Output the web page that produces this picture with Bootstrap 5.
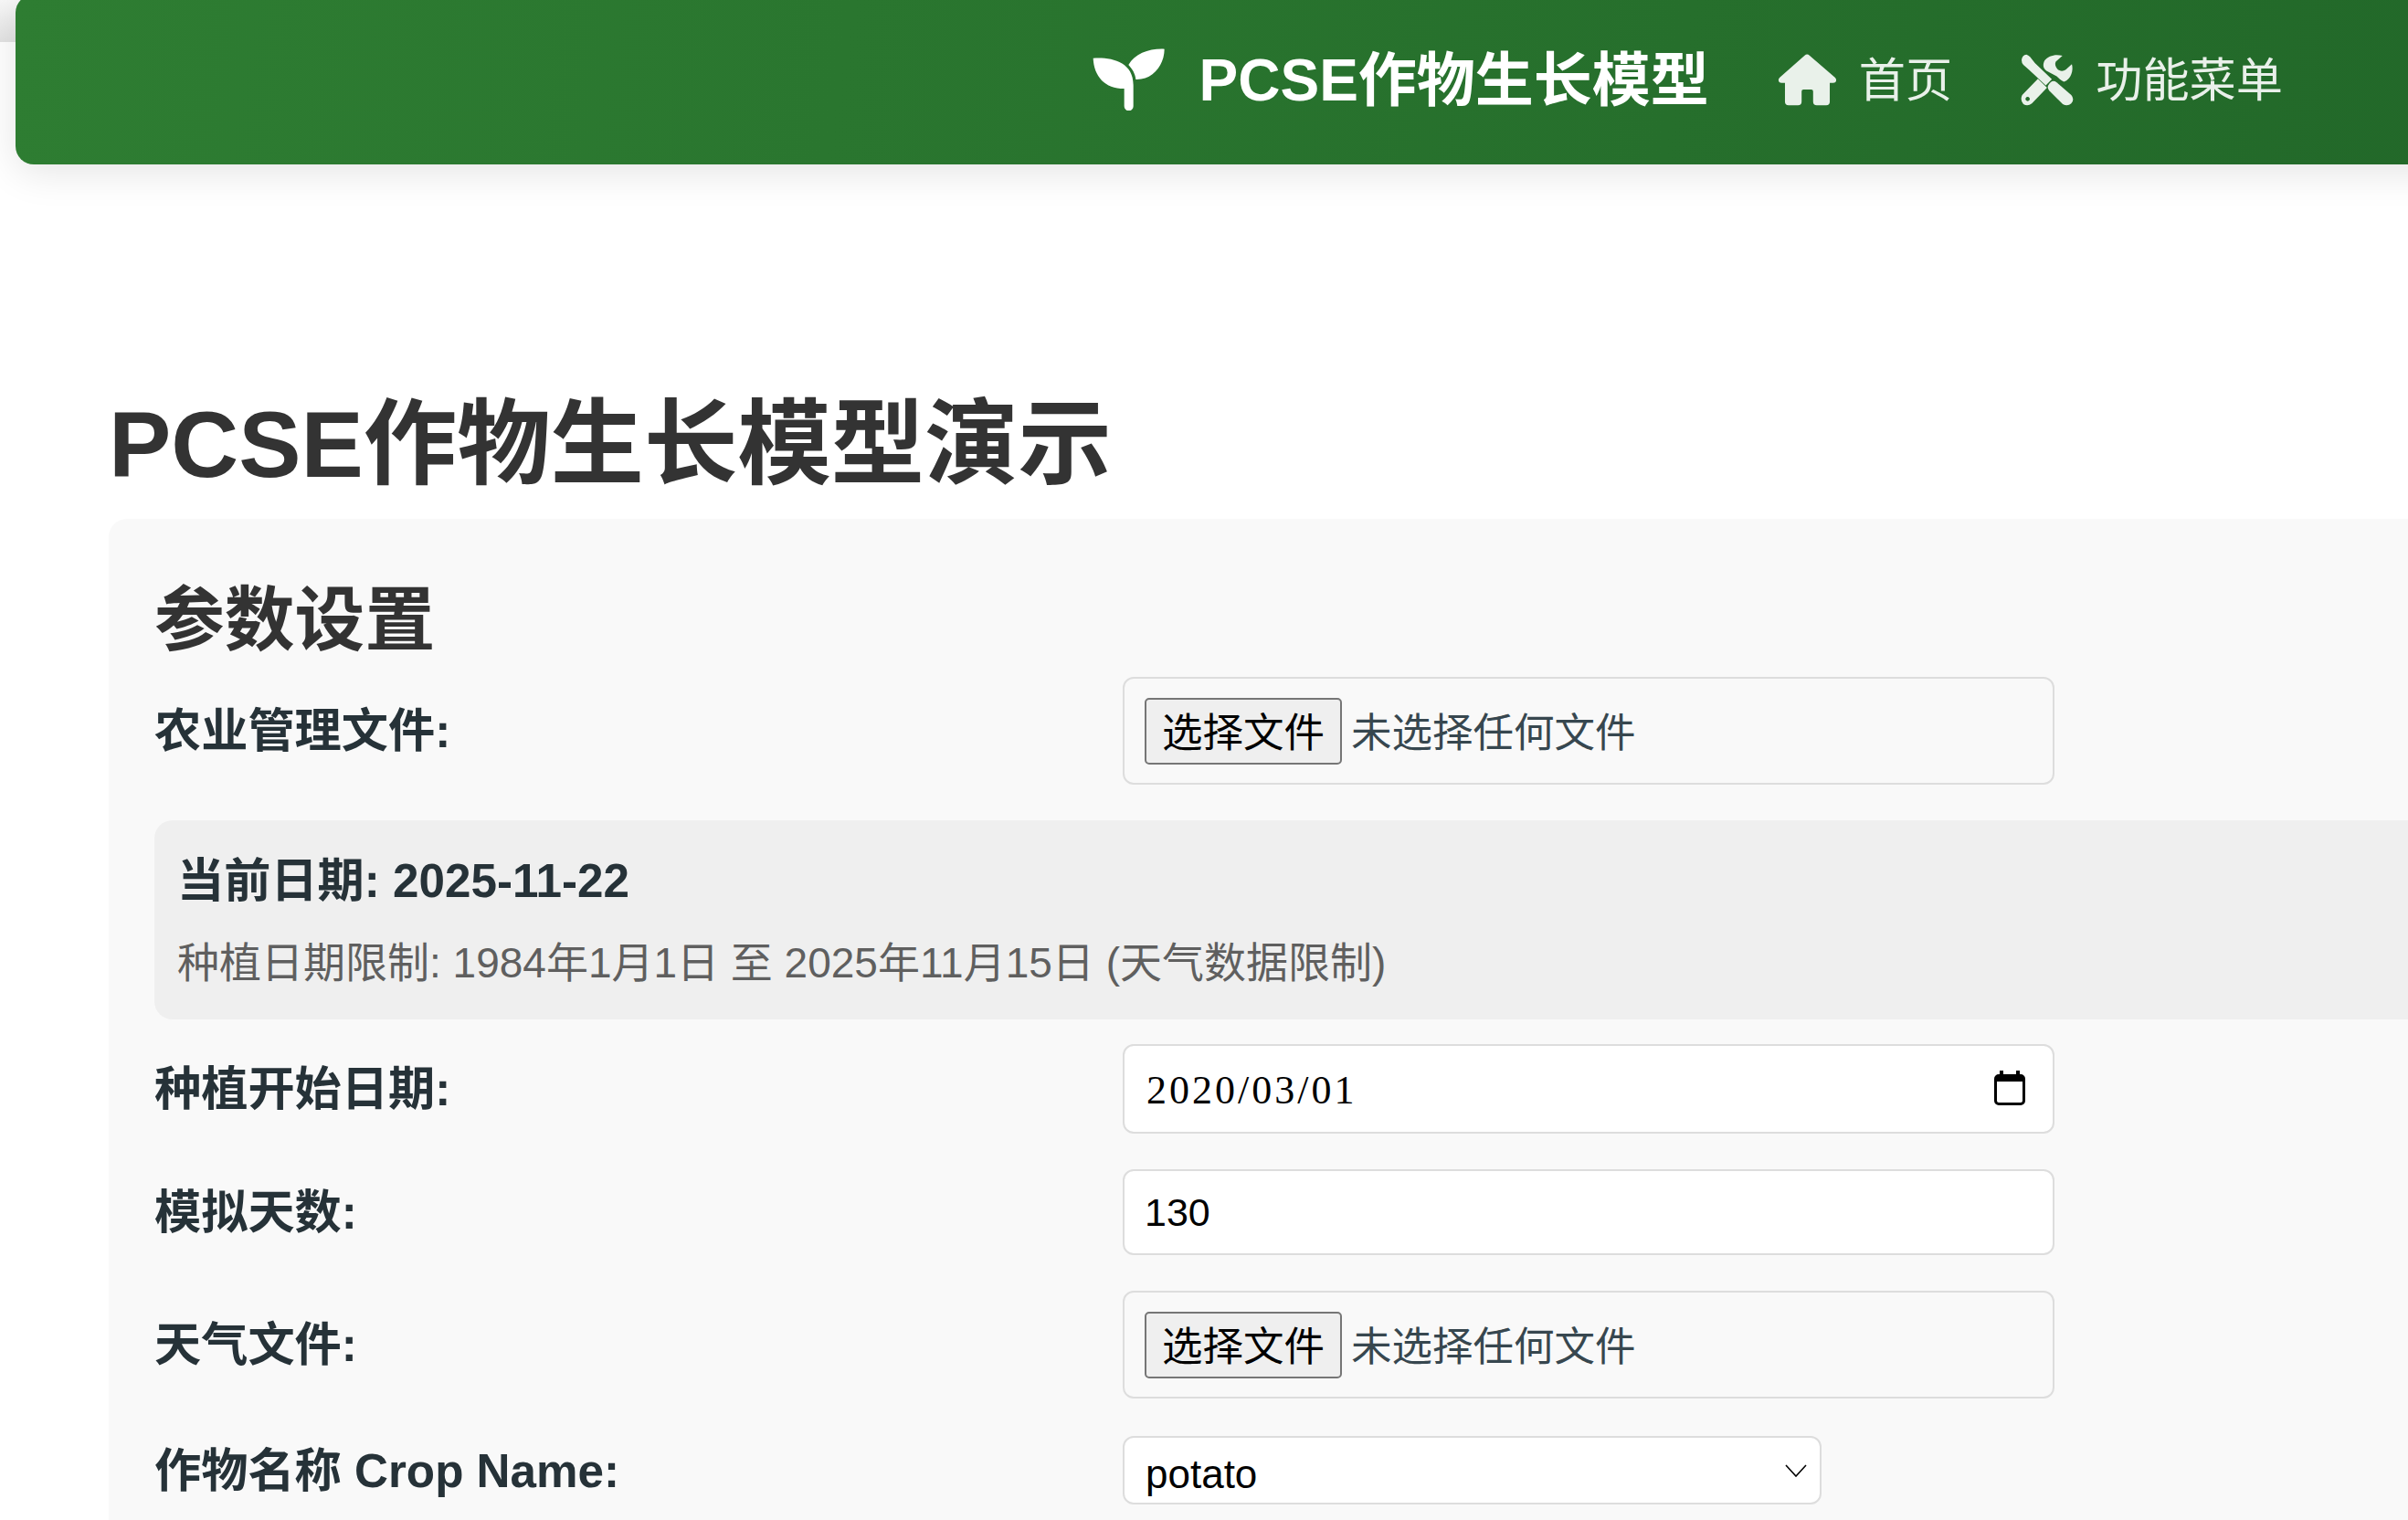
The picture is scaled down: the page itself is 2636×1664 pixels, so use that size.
<!DOCTYPE html>
<html lang="zh-CN">
<head>
<meta charset="utf-8">
<title>PCSE作物生长模型演示</title>
<link href="https://cdn.jsdelivr.net/npm/bootstrap@5.3.0/dist/css/bootstrap.min.css" rel="stylesheet">
<script src="https://cdn.jsdelivr.net/npm/bootstrap@5.3.0/dist/js/bootstrap.bundle.min.js"></script>
<style>
html, body { overflow: hidden; height: 100%; }
body {
  font-family: "Liberation Sans", "Noto Sans CJK SC", sans-serif;
  background: linear-gradient(#f8f8f8, #e3e3e3) 0 0 / 100% 46px no-repeat #fff;
  color: #263238;
}
.top-bar.navbar {
  margin: -6px -100px 0 17px;
  height: 186px;
  padding: 0 237px 0 0;
  justify-content: flex-end;
  flex-wrap: nowrap;
  border-radius: 20px;
  background: linear-gradient(100deg, #2e7d32, #226829);
  box-shadow: 0 8px 44px rgba(0,0,0,.11);
}
.top-brand.navbar-brand {
  display: flex; align-items: center; gap: 37px;
  margin: 0 75px 0 0; padding: 0;
  font-size: 64px; font-weight: 700; color: #fff; line-height: 1.2;
}
.top-link.nav-link {
  display: flex; align-items: center; gap: 24px;
  padding: 0; font-size: 51.2px; color: rgba(255,255,255,.9); line-height: 1.2;
}
.top-text { padding-top: 3px; }
.top-link + .top-link { margin-left: 75px; }
.page-body { margin: 247px -100px 0 119px; }
.page-title {
  font-size: 102.4px; font-weight: 700; line-height: 120px; color: #333;
  margin: 0 0 21px;
}
.set-panel { background: #f9f9f9; border-radius: 20px; padding: 50px 50px 200px; }
.set-title { font-size: 76.8px; font-weight: 700; line-height: 90px; color: #333; margin: 16px 0 17px; }
.set-row { display: flex; align-items: center; margin-bottom: 39px; }
.set-row-wide { margin-bottom: 41px; }
.set-label { flex: 0 0 1060px; margin: 0; padding-top: 2px; font-size: 51.2px; font-weight: 700; line-height: 60px; color: #263238; }
.set-input.form-control, .set-select.form-select {
  flex: 0 0 auto; width: 1020px;
  border: 2px solid #ddd; border-radius: 12px; background-color: #fff;
  box-shadow: none; color: #000;
}
.file-box.form-control {
  display: flex; align-items: center; gap: 10px;
  height: 118px; padding: 0 22px; background-color: transparent; font-size: 44.5px; color: #37474f;
}
.file-note { padding-top: 6px; }
.file-btn {
  height: 73px; width: 216px; padding: 6px 0 0; flex: none;
  border: 2px solid #767676; border-radius: 5px; background: #efefef; color: #000; font-size: 44.5px; line-height: 1;
}
.date-wrap { position: relative; flex: 0 0 auto; width: 1020px; height: 98px; }
.date-input.form-control {
  width: 100%; height: 100%; padding: 2px 24px 0;
  font-family: "Liberation Serif", serif; font-size: 44px; letter-spacing: 3px;
}
.date-icon { position: absolute; left: 954px; top: 29px; }
.num-input.form-control { height: 94px; padding: 0 22px; font-size: 43px; }
.set-select.form-select {
  width: 765px; height: 75px; padding: 8px 23px 0; font-size: 44px; line-height: 1.4;
  background-image: url("data:image/svg+xml,%3Csvg xmlns='http://www.w3.org/2000/svg' viewBox='0 0 24 14'%3E%3Cpath d='M1 1l11 12L23 1' fill='none' stroke='%23000' stroke-width='1.6'/%3E%3C/svg%3E");
  background-size: 24px 14px; background-position: right 14px center;
}
.info-box { background: #efefef; border-radius: 20px; padding: 29px 25px 24px; margin-bottom: 27px; }
.info-now { font-size: 51.2px; font-weight: 700; line-height: 75px; color: #263238; margin: 0 0 15px; }
.info-note { font-size: 46px; line-height: 75px; color: #5f5f5f; margin: 0; }
</style>
</head>
<body>
<nav class="navbar top-bar">
  <a class="navbar-brand top-brand" href="#">
    <svg width="80" height="68" viewBox="80 68 240 204" fill="#fff" aria-hidden="true"><path d="M82 100C140 96 215 110 214 190V258a15 15 0 0 1-30 0V200C120 200 85 160 82 100Z"/><path d="M316 70C316 120 280 172 222 170C220 150 210 135 198 122C220 85 265 68 316 70Z"/></svg>
    <span class="top-text">PCSE作物生长模型</span>
  </a>
  <a class="nav-link top-link" href="#">
    <svg width="65" height="57" viewBox="44 58 194 172" fill="#e9f1ea" aria-hidden="true"><path d="M132 63a12 12 0 0 1 16 0L232 136c8 7 4 18-6 18H215V216a12 12 0 0 1-12 12H172a12 12 0 0 1-12-12V182a6 6 0 0 0-6-6H128a6 6 0 0 0-6 6V216a12 12 0 0 1-12 12H79a12 12 0 0 1-12-12V154H56c-10 0-14-11-6-18Z"/></svg>
    <span class="top-text">首页</span>
  </a>
  <a class="nav-link top-link" href="#">
    <svg width="58" height="57" viewBox="65 58 175 172" fill="#e9f1ea" aria-hidden="true"><path d="M68 78Q70 62 84 60Q90 62 96 68L112 88L168 142L148 162L92 110L74 94Q68 88 68 78Z"/><path d="M156 162Q168 140 184 152L232 194Q244 208 232 222Q220 232 204 224L160 180Q152 172 156 162Z"/><path fill-rule="evenodd" d="M122 140L152 170L102 222Q88 232 74 224Q62 210 70 194ZM88 200a7 7 0 1 0 .01 0Z"/><path d="M203 64L181 84C177 92 180 100 186 108C194 116 206 116 214 110L234 92C240 112 232 142 208 150C198 146 190 138 184 132L150 114C138 105 138 92 144 80C156 64 180 58 203 64Z"/></svg>
    <span class="top-text">功能菜单</span>
  </a>
</nav>
<main class="page-body">
  <h1 class="page-title">PCSE作物生长模型演示</h1>
  <section class="set-panel">
    <h2 class="set-title">参数设置</h2>
    <div class="set-row">
      <label class="set-label form-label">农业管理文件:</label>
      <div class="form-control set-input file-box"><button type="button" class="file-btn">选择文件</button><span class="file-note">未选择任何文件</span></div>
    </div>
    <div class="info-box">
      <p class="info-now">当前日期: 2025-11-22</p>
      <p class="info-note">种植日期限制: 1984年1月1日 至 2025年11月15日 (天气数据限制)</p>
    </div>
    <div class="set-row">
      <label class="set-label form-label">种植开始日期:</label>
      <div class="date-wrap">
        <input type="text" class="form-control set-input date-input" value="2020/03/01" aria-label="种植开始日期">
        <svg class="date-icon" width="34" height="38" viewBox="0 0 34 38" aria-hidden="true"><path d="M6 0h4v4h14V0h4v4h1a5 5 0 0 1 5 5v24a5 5 0 0 1-5 5H5a5 5 0 0 1-5-5V9a5 5 0 0 1 5-5h1ZM3 12v21a2 2 0 0 0 2 2h24a2 2 0 0 0 2-2V12Z" fill-rule="evenodd"/></svg>
      </div>
    </div>
    <div class="set-row">
      <label class="set-label form-label">模拟天数:</label>
      <input type="text" class="form-control set-input num-input" value="130" aria-label="模拟天数">
    </div>
    <div class="set-row set-row-wide">
      <label class="set-label form-label">天气文件:</label>
      <div class="form-control set-input file-box"><button type="button" class="file-btn">选择文件</button><span class="file-note">未选择任何文件</span></div>
    </div>
    <div class="set-row">
      <label class="set-label form-label">作物名称 Crop Name:</label>
      <select class="form-select set-select" aria-label="作物名称"><option>potato</option></select>
    </div>
  </section>
</main>
</body>
</html>
